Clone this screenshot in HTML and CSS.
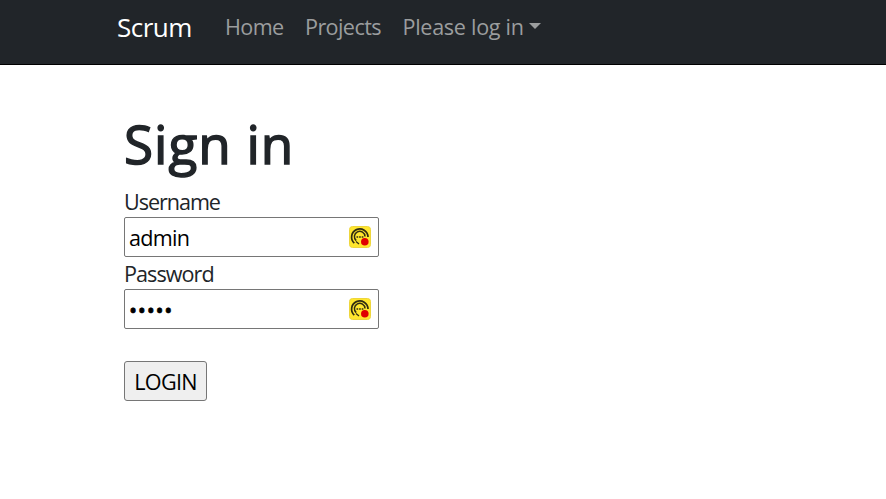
FILE: index.html
```html
<!DOCTYPE html>
<html lang="en">
<head>
<meta charset="utf-8">
<title>Sign in - Scrum</title>
<link rel="stylesheet" href="styles.css">
</head>
<body>
<svg width="0" height="0" class="sprite">
  <symbol id="key-icon" viewBox="0 0 22 22">
    <rect x=".5" y=".5" width="21" height="21" rx="3" fill="#ffe62e" stroke="#eed63c"/>
    <g fill="none" stroke="#302c12">
      <path d="M5.3 17.2A8.2 8.2 0 1 1 19 11" stroke-width="1.7"/>
      <path d="M7.2 14.6A5.3 5.3 0 1 1 16 10.5" stroke-width="1.5"/>
      <path d="M7.5 11h7" stroke-width="1.5" stroke-dasharray="1.7 .9"/>
      <path d="M7 15.5l3 2.5" stroke-width="1.2"/>
    </g>
    <circle cx="15.8" cy="15.8" r="3.8" fill="#df0000"/>
  </symbol>
</svg>
<nav class="navbar">
  <a class="brand">Scrum</a>
  <a class="nav-link home">Home</a>
  <a class="nav-link projects">Projects</a>
  <a class="nav-link account">Please log in</a>
  <span class="caret"></span>
</nav>
<main class="content">
  <h1>Sign in</h1>
  <form>
    <label class="user-label" for="username">Username</label>
    <div class="field">
      <input id="username" type="text" value="admin">
      <svg class="key"><use href="#key-icon"/></svg>
    </div>
    <label class="pass-label" for="password">Password</label>
    <div class="field">
      <input id="password" type="password" value="admin">
      <svg class="key"><use href="#key-icon"/></svg>
    </div>
    <button type="button">LOGIN</button>
  </form>
</main>
</body>
</html>
```
FILE: styles.css
```css
* { box-sizing: border-box; }
body {
  margin: 0;
  background: #fff;
  color: #212529;
  font: 21.6px/32px "Open Sans", "Noto Sans", sans-serif;
}
.sprite { display: block; }
.navbar {
  display: flex;
  height: 65px;
  padding: 11px 0 0 117px;
  background: #212529;
  border-bottom: 1px solid #000;
  white-space: nowrap;
}
.brand { width: 108px; color: #fff; font-size: 26px; letter-spacing: -.5px; }
.nav-link { color: #9b9d9e; letter-spacing: -.6px; }
.home { width: 80px; }
.projects { width: 97.5px; }
.account { width: 126.5px; letter-spacing: -.3px; }
.caret {
  width: 12px;
  height: 6px;
  margin-top: 12px;
  border: 6px solid transparent;
  border-top-color: #9b9d9e;
  border-bottom: 0;
}
.content { padding: 47px 0 0 124px; }
h1 {
  margin: 0 0 9px;
  font-size: 53px;
  font-weight: 400;
  line-height: 63px;
  height: 64px;
  letter-spacing: 1px;
  -webkit-text-stroke: 1.5px #212529;
}
label { display: block; height: 32px; line-height: 34px; }
.user-label { letter-spacing: -1.05px; }
.pass-label { letter-spacing: -.95px; }
.field { position: relative; width: 255px; height: 40px; }
input {
  width: 255px;
  height: 40px;
  padding: 2px 4px;
  border: 1px solid #767676;
  border-radius: 2px;
  outline: 0;
  background: #fff;
  color: #000;
  font: inherit;
  letter-spacing: -.75px;
  display: block;
}
input[type="password"] { letter-spacing: .7px; -webkit-text-stroke: .7px #000; }
.key { position: absolute; left: 225px; top: 9px; width: 22px; height: 22px; }
button {
  display: block;
  width: 83px;
  height: 40px;
  margin-top: 32px;
  padding: 1px 0 0;
  border: 1px solid #767676;
  border-radius: 3px;
  background: #efefef;
  color: #000;
  font: inherit;
  letter-spacing: -.7px;
}
```
